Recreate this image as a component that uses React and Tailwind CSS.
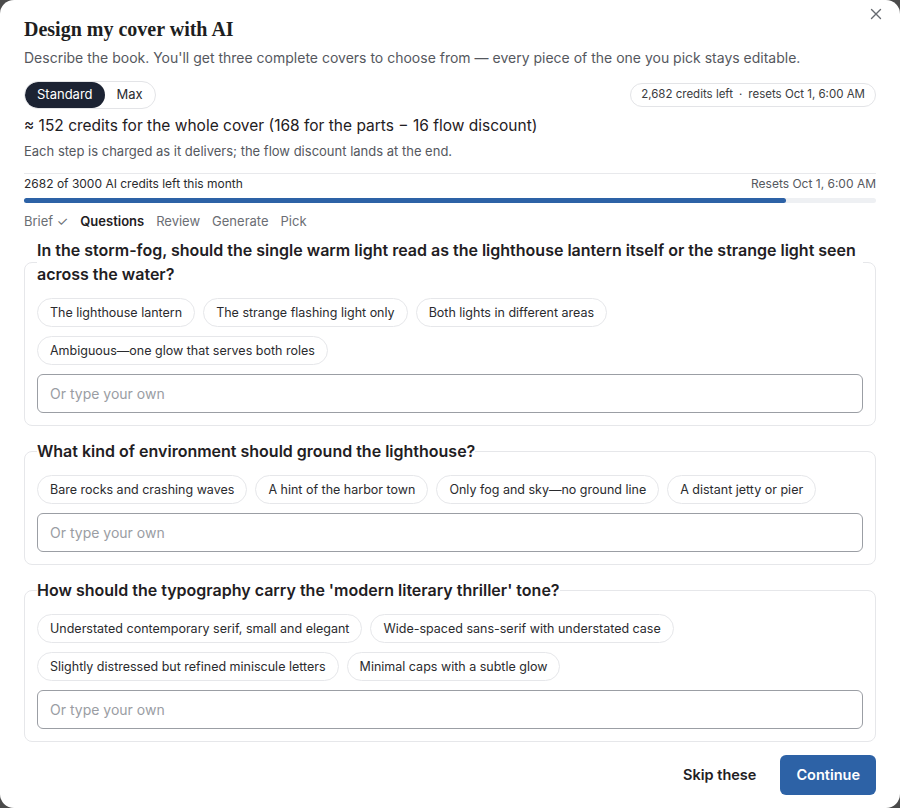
import {useState} from 'react'

const sans = {fontFamily: 'Inter, "Noto Sans", sans-serif'}

const questions = [
  {
    id: 'light',
    text: 'In the storm-fog, should the single warm light read as the lighthouse lantern itself or the strange light seen across the water?',
    options: [
      'The lighthouse lantern',
      'The strange flashing light only',
      'Both lights in different areas',
      'Ambiguous—one glow that serves both roles',
    ],
  },
  {
    id: 'ground',
    text: 'What kind of environment should ground the lighthouse?',
    options: [
      'Bare rocks and crashing waves',
      'A hint of the harbor town',
      'Only fog and sky—no ground line',
      'A distant jetty or pier',
    ],
  },
  {
    id: 'type',
    text: "How should the typography carry the 'modern literary thriller' tone?",
    options: [
      'Understated contemporary serif, small and elegant',
      'Wide-spaced sans-serif with understated case',
      'Slightly distressed but refined miniscule letters',
      'Minimal caps with a subtle glow',
    ],
  },
]

const steps = ['Review', 'Generate', 'Pick']

const QuestionCard = ({question, value, onChange}) => (
  <fieldset className="border border-[#e6e7ea] rounded-lg px-3 pb-3">
    <legend className="text-base leading-6 font-semibold text-[#1f2023]">
      {question.text}
    </legend>
    <div className="flex flex-wrap gap-x-2 gap-y-[9px] mt-3">
      {question.options.map((opt) => (
        <button
          key={opt}
          type="button"
          onClick={() => onChange(opt)}
          className={`h-[29px] px-3 rounded-full border text-[12.5px] leading-4 ${
            value === opt
              ? 'border-[#2d62a6] bg-[#eef3fa] text-[#1f2023]'
              : 'border-[#e6e7ea] text-[#2a2b2e]'
          }`}
        >
          {opt}
        </button>
      ))}
    </div>
    <input
      type="text"
      placeholder="Or type your own"
      className="mt-[9px] w-full h-[39px] px-[12px] rounded-md border border-[#9b9ea4] text-sm text-[#1f2023] placeholder-[#9a9da3] focus:outline-none"
    />
  </fieldset>
)

const App = () => {
  const [tier, setTier] = useState('standard')
  const [answers, setAnswers] = useState({})

  return (
    <div className="w-[900px] h-[808px] bg-[#4b4b4b]" style={sans}>
      <div className="relative h-full bg-white rounded-[14px] px-6 pt-[15px]">
        {/* Close */}
        <button className="absolute top-[8px] right-[18px] text-[#666a70]">
          <svg width="12" height="12" viewBox="0 0 12 12" fill="none" stroke="currentColor" strokeWidth="1.4" strokeLinecap="round">
            <path d="M1.5 1.5l9 9M10.5 1.5l-9 9" />
          </svg>
        </button>

        {/* Header */}
        <h1
          className="text-xl leading-7 font-bold text-[#1d1e21]"
          style={{fontFamily: '"Liberation Serif", "DejaVu Serif", serif'}}
        >
          Design my cover with AI
        </h1>
        <p className="mt-[5px] text-sm leading-5 text-[#55585e]">
          Describe the book. You'll get three complete covers to choose from — every piece of the one you pick stays editable.
        </p>

        {/* Tier + credits */}
        <div className="mt-[13px] flex items-center justify-between">
          <div className="flex h-7 rounded-full border border-[#e3e4e7] overflow-hidden text-[13px]">
            <button
              onClick={() => setTier('standard')}
              className={`px-[12px] rounded-full ${tier === 'standard' ? 'bg-[#1c2333] text-white' : 'text-[#2a2b2e]'}`}
            >
              Standard
            </button>
            <button
              onClick={() => setTier('max')}
              className={`px-[12px] rounded-full ${tier === 'max' ? 'bg-[#1c2333] text-white' : 'text-[#2a2b2e]'}`}
            >
              Max
            </button>
          </div>
          <div className="h-6 flex items-center px-2.5 rounded-full border border-[#e3e4e7] text-[11.5px] text-[#3a3c40]">
            2,682 credits left <span className="mx-1.5">·</span> resets Oct 1, 6:00 AM
          </div>
        </div>

        <p className="mt-[5px] text-[15.5px] leading-6 text-[#1f2023]">
          ≈ 152 credits for the whole cover (168 for the parts − 16 flow discount)
        </p>
        <p className="mt-[3px] text-[13px] leading-5 text-[#55585e]">
          Each step is charged as it delivers; the flow discount lands at the end.
        </p>

        {/* Monthly usage */}
        <div className="mt-3 border-t border-[#e8e9ec] pt-[2px]">
          <div className="flex justify-between text-xs leading-4 text-[#2a2b2e]">
            <span>2682 of 3000 AI credits left this month</span>
            <span className="text-[#55585e]">Resets Oct 1, 6:00 AM</span>
          </div>
          <div className="mt-[6px] h-[5px] rounded-full bg-[#eef0f3]">
            <div className="h-full rounded-full bg-[#2d62a6]" style={{width: `${(2682 / 3000) * 100}%`}} />
          </div>
        </div>

        {/* Steps */}
        <div className="mt-2 flex gap-3 text-[13px] leading-5 text-[#6b6e74]">
          <span>Brief ✓</span>
          <span className="font-semibold text-[#1f2023]">Questions</span>
          {steps.map((s) => (
            <span key={s}>{s}</span>
          ))}
        </div>

        {/* Questions */}
        <div className="mt-[7px] flex flex-col gap-[13px]">
          {questions.map((q) => (
            <QuestionCard
              key={q.id}
              question={q}
              value={answers[q.id]}
              onChange={(v) => setAnswers({...answers, [q.id]: v})}
            />
          ))}
        </div>

        {/* Footer */}
        <div className="mt-[13px] flex justify-end gap-2">
          <button className="h-10 px-4 text-[14.5px] font-semibold text-[#1f2023]">Skip these</button>
          <button className="h-10 px-4 rounded-md bg-[#2d62a6] text-[14.5px] font-semibold text-white">Continue</button>
        </div>
      </div>
    </div>
  )
}

export default App
